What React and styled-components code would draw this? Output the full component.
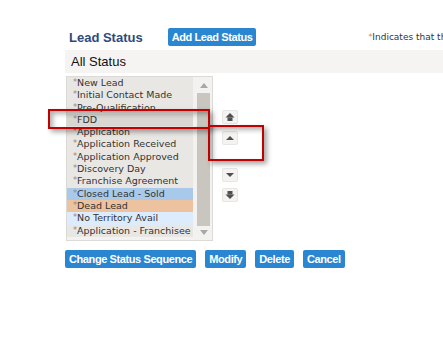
import React from 'react'
import styled, { createGlobalStyle } from 'styled-components'

const GlobalStyle = createGlobalStyle`
  html, body {
    margin: 0;
    padding: 0;
    background: #fff;
    overflow: hidden;
  }
  body {
    font-family: "Liberation Sans", Arial, sans-serif;
  }
`

const Page = styled.div`
  position: relative;
  width: 443px;
  height: 346px;
  overflow: hidden;
  box-sizing: border-box;
  padding: 28px 0 0 65px;
`
const Header = styled.div`
  display: flex;
  align-items: center;
  height: 18px;
  white-space: nowrap;
`
const Title = styled.h2`
  margin: 0 0 0 4px;
  font-size: 13px;
  font-weight: bold;
  color: #2d4b7c;
`
const Divider = styled.span`
  width: 1px;
  height: 14px;
  background: #e2e0dc;
  margin: 0 7px 0 18px;
`
const BlueButton = styled.button`
  height: 18px;
  padding: 0 4px;
  border: none;
  border-radius: 2px;
  background: #2a86d1;
  color: #fff;
  font-family: "Liberation Sans", Arial, sans-serif;
  font-size: 11px;
  font-weight: bold;
  letter-spacing: -0.4px;
  line-height: 18px;
  white-space: nowrap;
  cursor: pointer;
`
const Note = styled.span`
  margin-left: 112px;
  font-family: "DejaVu Sans", Verdana, sans-serif;
  font-size: 9px;
  color: #333;
`
const Star = styled.span`
  color: ${p => p.color || '#8a8a8a'};
  font-size: 0.85em;
  vertical-align: 1px;
`
const Band = styled.div`
  margin-top: 4px;
  height: 23px;
  line-height: 23px;
  background: #f5f4f2;
  padding-left: 6px;
  font-size: 13px;
  color: #111;
`
const ListArea = styled.div`
  display: flex;
  align-items: flex-start;
  margin-top: 3px;
`
const Frame = styled.div`
  display: flex;
  box-sizing: border-box;
  width: 147px;
  height: 165px;
  margin-left: 1px;
  border: 1px solid #dcdad6;
  background: #f3f2f0;
`
const Items = styled.ul`
  list-style: none;
  margin: 0;
  padding: 0;
  width: 126px;
  height: 160px;
  background: #e9e7e3;
`
const Item = styled.li`
  height: 12.3px;
  line-height: 12.3px;
  padding-left: 6px;
  font-family: "DejaVu Sans", Verdana, sans-serif;
  font-size: 9.5px;
  color: #333;
  white-space: nowrap;
  overflow: hidden;
  background: ${p => p.bg || 'transparent'};
`
const Scrollbar = styled.div`
  display: flex;
  flex-direction: column;
  align-items: center;
  width: 13px;
  margin: 1px 0 0 4px;
`
const ScrollArrow = styled.div`
  height: ${p => p.h}px;
  display: flex;
  align-items: center;
  justify-content: center;
`
const Thumb = styled.div`
  width: 13px;
  height: 133px;
  background: #c9c6c0;
`
const Controls = styled.div`
  display: flex;
  flex-direction: column;
  margin-left: 9px;
  padding-top: 34px;
`
const MoveButton = styled.button`
  box-sizing: border-box;
  width: 16px;
  height: 14px;
  padding: 0;
  margin-top: ${p => p.top || 0}px;
  display: flex;
  align-items: center;
  justify-content: center;
  border: 1px solid #e8e6e2;
  border-radius: 2px;
  background: #f4f3f1;
  cursor: pointer;
`
const Actions = styled.div`
  display: flex;
  margin-top: 9px;
  gap: 9px;
`
const Callout = styled.div`
  position: absolute;
  box-sizing: border-box;
  border: 2px solid #c30000;
  box-shadow: 3px 3px 5px rgba(0, 0, 0, 0.35), inset 3px 3px 5px rgba(0, 0, 0, 0.3);
  pointer-events: none;
`

const statuses = [
  { name: 'New Lead' },
  { name: 'Initial Contact Made' },
  { name: 'Pre-Qualification' },
  { name: 'FDD', bg: '#dad7d2' },
  { name: 'Application' },
  { name: 'Application Received' },
  { name: 'Application Approved' },
  { name: 'Discovery Day' },
  { name: 'Franchise Agreement' },
  { name: 'Closed Lead - Sold', bg: '#a9c9ea' },
  { name: 'Dead Lead', bg: '#edc29f' },
  { name: 'No Territory Avail', bg: '#dcecfd' },
  { name: 'Application - Franchisee' },
]

const Arrow = ({ dir = 'up', double, color = '#4f4f4f' }) => (
  <svg width="14" height="12" viewBox="0 0 14 12">
    {dir === 'up' ? (
      double ? (
        <>
          <path d="M2.5 6.5 L7 2 L11.5 6.5 Z" fill={color} />
          <rect x="4.5" y="6.5" width="5" height="3.5" fill={color} />
        </>
      ) : (
        <path d="M3 8 L7 4 L11 8 Z" fill={color} />
      )
    ) : double ? (
      <>
        <rect x="4.5" y="2" width="5" height="3.5" fill={color} />
        <path d="M2.5 5.5 L7 10 L11.5 5.5 Z" fill={color} />
      </>
    ) : (
      <path d="M3 4 L7 8 L11 4 Z" fill={color} />
    )}
  </svg>
)

const SmallArrow = ({ dir }) => (
  <svg width="8" height="5" viewBox="0 0 8 5">
    <path d={dir === 'up' ? 'M0 5 L4 0 L8 5 Z' : 'M0 0 L4 5 L8 0 Z'} fill="#aaa8a4" />
  </svg>
)

export default function App() {
  return (
    <Page>
      <GlobalStyle />
      <Header>
        <Title>Lead Status</Title>
        <Divider />
        <BlueButton>Add Lead Status</BlueButton>
        <Note>
          <Star color="#e07b39">*</Star>Indicates that the status is system defined
        </Note>
      </Header>
      <Band>All Status</Band>
      <ListArea>
        <Frame>
          <Items>
            {statuses.map(s => (
              <Item key={s.name} bg={s.bg}>
                <Star>*</Star>
                {s.name}
              </Item>
            ))}
          </Items>
          <Scrollbar>
            <ScrollArrow h={15}>
              <SmallArrow dir="up" />
            </ScrollArrow>
            <Thumb />
            <ScrollArrow h={12}>
              <SmallArrow dir="down" />
            </ScrollArrow>
          </Scrollbar>
        </Frame>
        <Controls>
          <MoveButton title="Move to top">
            <Arrow dir="up" double />
          </MoveButton>
          <MoveButton top={7} title="Move up">
            <Arrow dir="up" />
          </MoveButton>
          <MoveButton top={23} title="Move down">
            <Arrow dir="down" />
          </MoveButton>
          <MoveButton top={6} title="Move to bottom">
            <Arrow dir="down" double />
          </MoveButton>
        </Controls>
      </ListArea>
      <Actions>
        <BlueButton>Change Status Sequence</BlueButton>
        <BlueButton>Modify</BlueButton>
        <BlueButton>Delete</BlueButton>
        <BlueButton>Cancel</BlueButton>
      </Actions>
      <Callout style={{ left: 48, top: 109, width: 162, height: 20 }} />
      <Callout style={{ left: 208, top: 125, width: 56, height: 36 }} />
    </Page>
  )
}
